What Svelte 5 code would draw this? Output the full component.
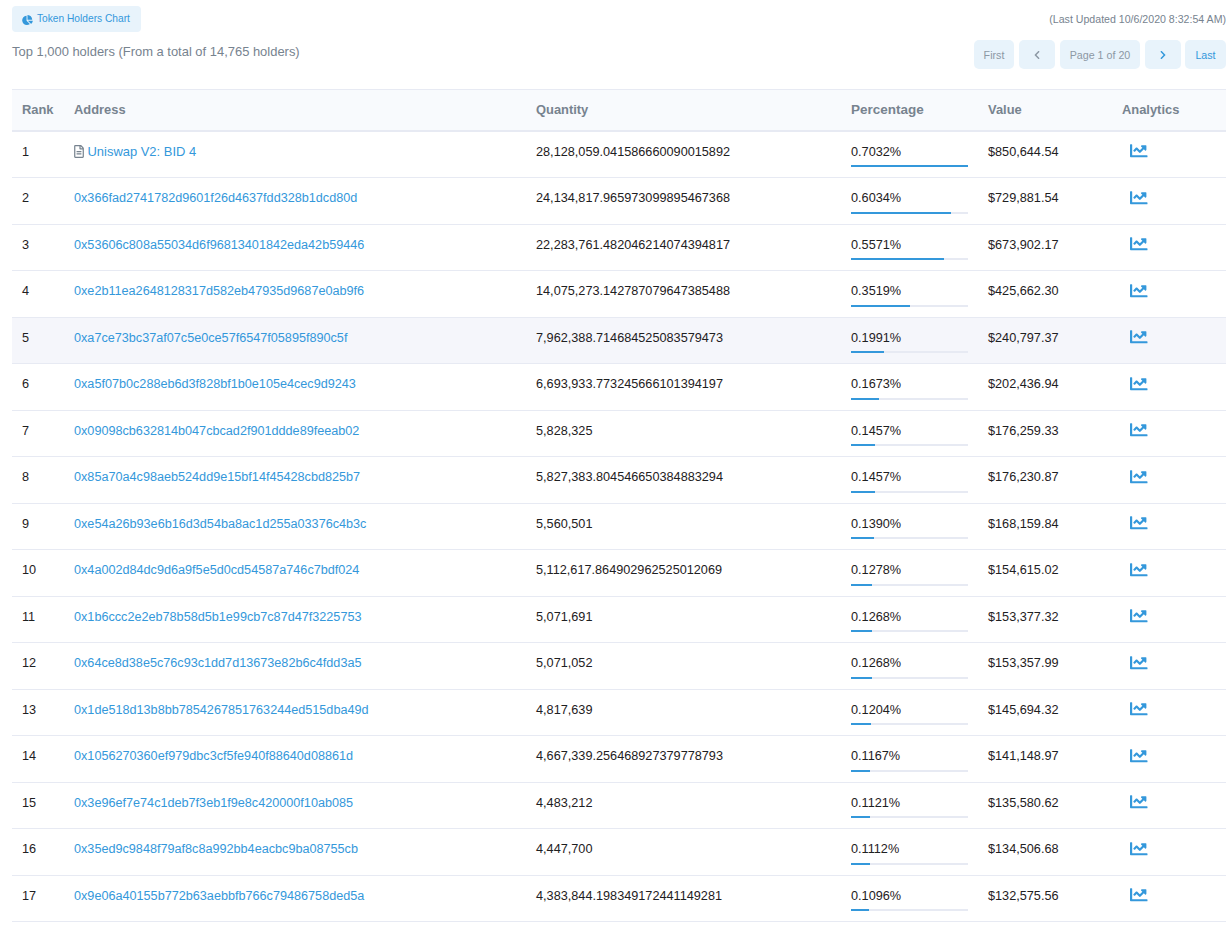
<script lang="ts">
	interface Holder {
		address: string;
		quantity: string;
		pct: number;
		value: string;
		name?: string;
	}

	const holders: Holder[] = [
		{ address: '', name: 'Uniswap V2: BID 4', quantity: '28,128,059.041586660090015892', pct: 0.7032, value: '$850,644.54' },
		{ address: '0x366fad2741782d9601f26d4637fdd328b1dcd80d', quantity: '24,134,817.965973099895467368', pct: 0.6034, value: '$729,881.54' },
		{ address: '0x53606c808a55034d6f96813401842eda42b59446', quantity: '22,283,761.482046214074394817', pct: 0.5571, value: '$673,902.17' },
		{ address: '0xe2b11ea2648128317d582eb47935d9687e0ab9f6', quantity: '14,075,273.142787079647385488', pct: 0.3519, value: '$425,662.30' },
		{ address: '0xa7ce73bc37af07c5e0ce57f6547f05895f890c5f', quantity: '7,962,388.714684525083579473', pct: 0.1991, value: '$240,797.37' },
		{ address: '0xa5f07b0c288eb6d3f828bf1b0e105e4cec9d9243', quantity: '6,693,933.773245666101394197', pct: 0.1673, value: '$202,436.94' },
		{ address: '0x09098cb632814b047cbcad2f901ddde89feeab02', quantity: '5,828,325', pct: 0.1457, value: '$176,259.33' },
		{ address: '0x85a70a4c98aeb524dd9e15bf14f45428cbd825b7', quantity: '5,827,383.804546650384883294', pct: 0.1457, value: '$176,230.87' },
		{ address: '0xe54a26b93e6b16d3d54ba8ac1d255a03376c4b3c', quantity: '5,560,501', pct: 0.139, value: '$168,159.84' },
		{ address: '0x4a002d84dc9d6a9f5e5d0cd54587a746c7bdf024', quantity: '5,112,617.864902962525012069', pct: 0.1278, value: '$154,615.02' },
		{ address: '0x1b6ccc2e2eb78b58d5b1e99cb7c87d47f3225753', quantity: '5,071,691', pct: 0.1268, value: '$153,377.32' },
		{ address: '0x64ce8d38e5c76c93c1dd7d13673e82b6c4fdd3a5', quantity: '5,071,052', pct: 0.1268, value: '$153,357.99' },
		{ address: '0x1de518d13b8bb7854267851763244ed515dba49d', quantity: '4,817,639', pct: 0.1204, value: '$145,694.32' },
		{ address: '0x1056270360ef979dbc3cf5fe940f88640d08861d', quantity: '4,667,339.256468927379778793', pct: 0.1167, value: '$141,148.97' },
		{ address: '0x3e96ef7e74c1deb7f3eb1f9e8c420000f10ab085', quantity: '4,483,212', pct: 0.1121, value: '$135,580.62' },
		{ address: '0x35ed9c9848f79af8c8a992bb4eacbc9ba08755cb', quantity: '4,447,700', pct: 0.1112, value: '$134,506.68' },
		{ address: '0x9e06a40155b772b63aebbfb766c79486758ded5a', quantity: '4,383,844.198349172441149281', pct: 0.1096, value: '$132,575.56' }
	];

	const maxPct = holders[0].pct;
</script>

<div class="page">
	<div class="top-row">
		<a class="chart-btn" href="#chart">
			<svg class="pie" viewBox="0 0 544 512" aria-hidden="true">
				<path d="M527.79 288H290.5l158.03 158.03c6.04 6.04 15.98 6.53 22.19.68 38.7-36.46 65.32-85.61 73.13-140.86 1.34-9.46-6.51-17.85-16.06-17.85zm-15.83-64.8C503.72 103.74 408.26 8.28 288.8.04 279.68-.59 272 7.1 272 16.24V240h223.77c9.14 0 16.82-7.68 16.19-16.8zM224 288V50.71c0-9.55-8.39-17.4-17.84-16.06C86.99 51.49-4.1 155.6.14 280.37 4.5 408.51 114.83 513.59 243.03 511.98c50.4-.63 96.97-16.87 135.26-44.03 7.9-5.6 8.42-17.23 1.57-24.08L224 288z" />
			</svg>
			Token Holders Chart
		</a>
		<span class="updated">(Last Updated 10/6/2020 8:32:54 AM)</span>
	</div>

	<div class="second-row">
		<p class="summary">Top 1,000 holders (From a total of 14,765 holders)</p>
		<nav class="pager">
			<span class="pg first muted">First</span>
			<span class="pg arrow muted">
				<svg viewBox="0 0 320 512" aria-hidden="true">
					<path d="M34.52 239.03L228.87 44.69c9.37-9.37 24.57-9.37 33.94 0l22.67 22.67c9.36 9.36 9.37 24.52.04 33.9L131.49 256l154.02 154.75c9.34 9.38 9.32 24.54-.04 33.9l-22.67 22.67c-9.37 9.37-24.57 9.37-33.94 0L34.52 272.97c-9.37-9.37-9.37-24.57 0-33.94z" />
				</svg>
			</span>
			<span class="pg page-no muted">Page 1 of 20</span>
			<a class="pg arrow" href="#next">
				<svg viewBox="0 0 320 512" aria-hidden="true">
					<path d="M285.476 272.971L91.132 467.314c-9.373 9.373-24.569 9.373-33.941 0l-22.667-22.667c-9.357-9.357-9.375-24.522-.04-33.901L188.505 256 34.484 101.255c-9.335-9.379-9.317-24.544.04-33.901l22.667-22.667c9.373-9.373 24.569-9.373 33.941 0L285.475 239.03c9.373 9.372 9.373 24.568.001 33.941z" />
				</svg>
			</a>
			<a class="pg last" href="#last">Last</a>
		</nav>
	</div>

	<table>
		<colgroup>
			<col style="width: 52px" />
			<col style="width: 462px" />
			<col style="width: 315px" />
			<col style="width: 137px" />
			<col style="width: 134px" />
			<col />
		</colgroup>
		<thead>
			<tr>
				<th>Rank</th>
				<th>Address</th>
				<th>Quantity</th>
				<th class="wide">Percentage</th>
				<th>Value</th>
				<th>Analytics</th>
			</tr>
		</thead>
		<tbody>
			{#each holders as holder, i}
				<tr class:hovered={i === 4}>
					<td>{i + 1}</td>
					<td>
						{#if holder.name}
							<svg class="file" viewBox="0 0 384 512" aria-hidden="true">
								<path d="M288 248v28c0 6.6-5.4 12-12 12H108c-6.6 0-12-5.4-12-12v-28c0-6.6 5.4-12 12-12h168c6.6 0 12 5.4 12 12zm-12 72H108c-6.6 0-12 5.4-12 12v28c0 6.6 5.4 12 12 12h168c6.6 0 12-5.4 12-12v-28c0-6.6-5.4-12-12-12zm108-188.1V464c0 26.5-21.5 48-48 48H48c-26.5 0-48-21.5-48-48V48C0 21.5 21.5 0 48 0h204.1C264.8 0 277 5.1 286 14.1L369.9 98c9 8.9 14.1 21.2 14.1 33.9zm-128-80V128h76.1L256 51.9zM336 464V176H232c-13.3 0-24-10.7-24-24V48H48v416h288z" />
							</svg>
							<a class="name" href="#token">{holder.name}</a>
						{:else}
							<a class="addr" href="#token">{holder.address}</a>
						{/if}
					</td>
					<td>{holder.quantity}</td>
					<td>
						<div>{holder.pct.toFixed(4)}%</div>
						<div class="bar">
							<div class="bar-fill" style="width: {(holder.pct / maxPct) * 100}%"></div>
						</div>
					</td>
					<td>{holder.value}</td>
					<td>
						<a class="analytics" href="#analytics" aria-label="Analytics">
							<svg viewBox="0 0 512 512" aria-hidden="true">
								<path d="M496 384H64V80c0-8.84-7.16-16-16-16H16C7.16 64 0 71.16 0 80v336c0 17.67 14.33 32 32 32h464c8.84 0 16-7.16 16-16v-32c0-8.84-7.16-16-16-16zM464 96H345.94c-21.38 0-32.09 25.85-16.97 40.97l32.4 32.4L288 242.75l-73.37-73.37c-12.5-12.5-32.76-12.5-45.25 0l-68.69 68.69c-6.25 6.25-6.25 16.38 0 22.63l22.62 22.62c6.25 6.25 16.38 6.25 22.63 0L192 237.25l73.37 73.37c12.5 12.5 32.76 12.5 45.25 0l96-96 32.4 32.4c15.12 15.12 40.97 4.41 40.97-16.97V112c0-8.84-7.16-16-16-16z" />
							</svg>
						</a>
					</td>
				</tr>
			{/each}
		</tbody>
	</table>
</div>

<style>
	:global(body) {
		background: #fff;
		overflow: hidden;
	}

	.page {
		padding: 6px 5px 0 12px;
		font-family: 'Liberation Sans', Arial, sans-serif;
		font-size: 12.7px;
		line-height: 18.375px;
		color: #1e2022;
	}

	a {
		color: #3498db;
		text-decoration: none;
	}

	svg {
		fill: currentColor;
		display: inline-block;
	}

	.top-row,
	.second-row {
		display: flex;
		justify-content: space-between;
		align-items: flex-start;
	}

	.second-row {
		margin-top: 8px;
		margin-bottom: 20px;
	}

	.chart-btn {
		box-sizing: border-box;
		display: flex;
		align-items: center;
		gap: 4px;
		height: 26px;
		padding: 1px 11px 0 10px;
		background: #e8f3fb;
		border-radius: 4px;
		font-size: 10.2px;
	}

	.pie {
		width: 11px;
		height: 10px;
	}

	.updated {
		font-size: 10.6px;
		line-height: 14px;
		margin-top: 6px;
		color: #77838f;
	}

	.summary {
		margin: 3px 0 0;
		font-size: 12.95px;
		color: #77838f;
	}

	.pager {
		display: flex;
		gap: 5px;
	}

	.pg {
		box-sizing: border-box;
		display: flex;
		align-items: center;
		justify-content: center;
		height: 29px;
		padding-top: 1px;
		background: #e8f3fb;
		border-radius: 5px;
		font-size: 10.7px;
		color: #3498db;
	}

	.pg.muted {
		color: #8c98a4;
	}

	.first {
		width: 40px;
	}

	.arrow {
		width: 36px;
	}

	.arrow svg {
		width: 6px;
		height: 10px;
	}

	.page-no {
		width: 80px;
	}

	.last {
		width: 41px;
		margin-left: -1px;
	}

	table {
		width: 100%;
		table-layout: fixed;
		border-collapse: separate;
		border-spacing: 0;
	}

	th {
		box-sizing: border-box;
		height: 42.5px;
		padding: 0 10px;
		text-align: left;
		font-size: 12.9px;
		font-weight: 700;
		color: #77838f;
		background: #f8fafd;
		border-top: 1px solid #e7eaf3;
		border-bottom: 2px solid #e7eaf3;
	}

	th.wide {
		font-size: 13.5px;
	}

	td {
		box-sizing: border-box;
		height: 46.5px;
		padding: 11px 10px 0;
		border-bottom: 1px solid #e7eaf3;
		vertical-align: top;
		white-space: nowrap;
	}

	tr.hovered td {
		background: #f5f6fb;
	}

	.addr {
		font-size: 12.65px;
	}

	.name {
		font-size: 12.95px;
	}

	.file {
		width: 10px;
		height: 13px;
		color: #77838f;
		vertical-align: -2px;
	}

	.bar {
		width: 117px;
		height: 2px;
		margin-top: 4.5px;
		background: #e7eaf3;
	}

	.bar-fill {
		height: 100%;
		background: #3498db;
	}

	.analytics {
		display: block;
		width: 17.5px;
		height: 17.5px;
		margin: -0.5px 0 0 8px;
	}

	.analytics svg {
		display: block;
		width: 17.5px;
		height: 17.5px;
	}
</style>
